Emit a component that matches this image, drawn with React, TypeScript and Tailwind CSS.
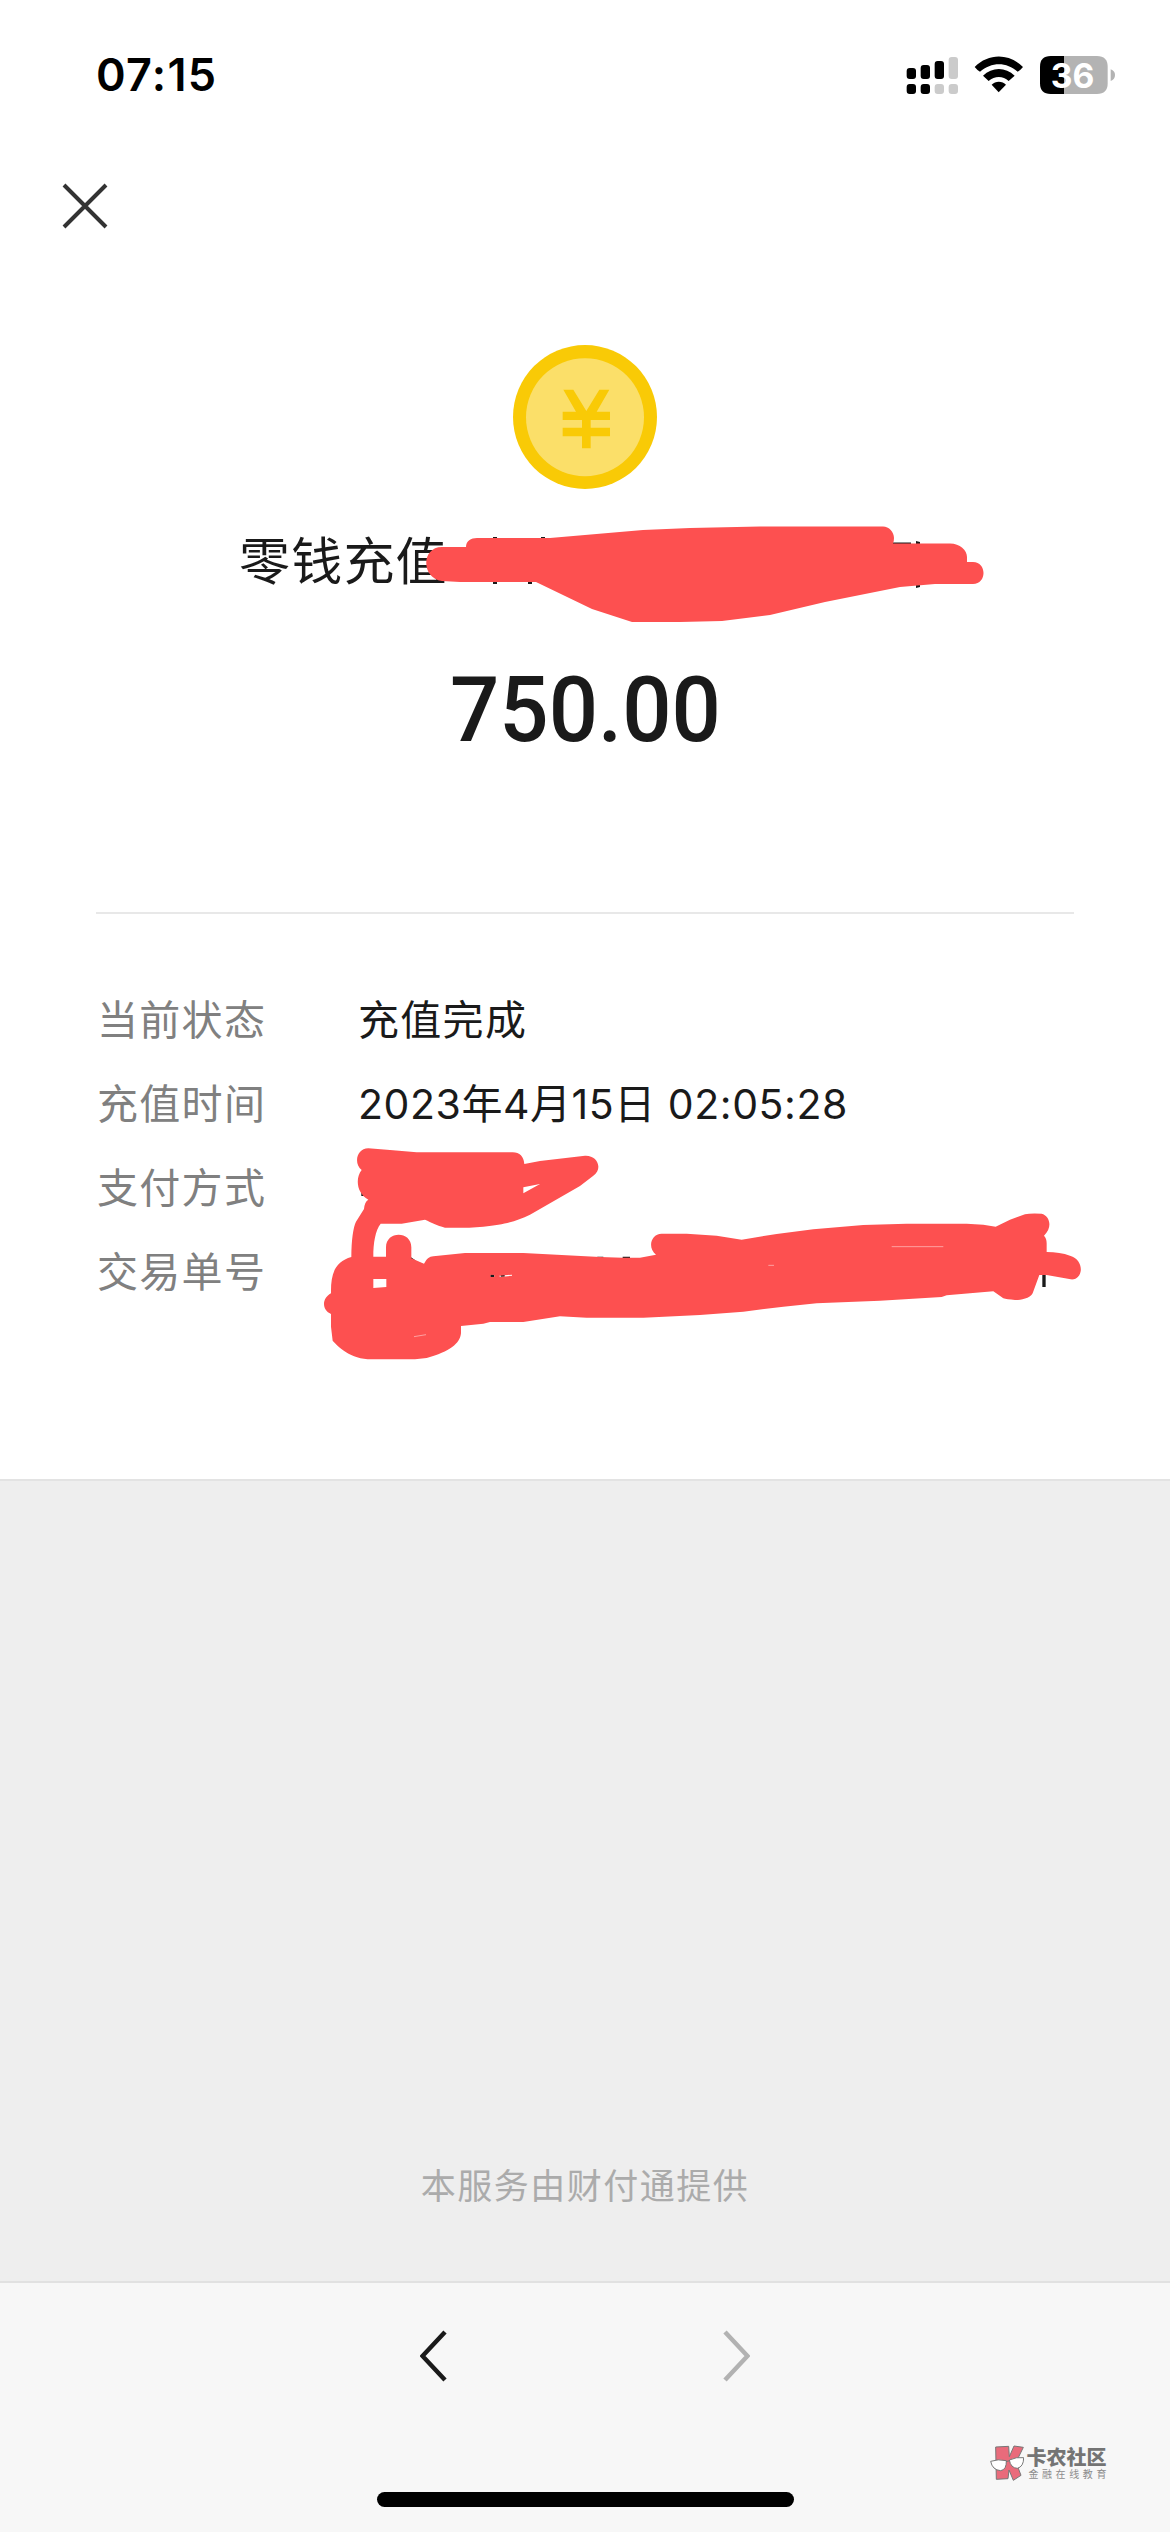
import React from 'react';

const details = [
  { label: '当前状态', value: '充值完成', tracking: 'tracking-[1.3px]' },
  { label: '充值时间', value: '2023年4月15日 02:05:28', tracking: 'tracking-[0.55px]' },
  { label: '支付方式', value: '', tracking: '' },
  { label: '交易单号', value: '', tracking: '' }
];

const StatusBar = () => (
  <div className="flex h-[150px] items-center justify-between pl-[96px] pr-[54px]">
    <span className="font-['Inter'] text-[45px] leading-[54px] font-semibold tracking-[1.3px] text-black">
      07:15
    </span>
    <svg className="h-[40px] w-[211px]" viewBox="75 72 633 120">
      {/* Dual SIM signal */}
      <g fill="#000">
        <rect x="80" y="111" width="28" height="33" rx="9" />
        <rect x="122" y="102" width="28" height="42" rx="9" />
        <rect x="164" y="90" width="28" height="54" rx="9" />
        <rect x="80" y="159" width="28" height="30" rx="9" />
        <rect x="122" y="159" width="28" height="30" rx="9" />
      </g>
      <g fill="#cbcbcb">
        <rect x="206" y="78" width="28" height="66" rx="9" />
        <rect x="164" y="159" width="28" height="30" rx="9" />
        <rect x="206" y="159" width="28" height="30" rx="9" />
      </g>
      {/* Wifi */}
      <path d="M284 108C325 66 388 66 429 108Q420 119 413 122C380 92 334 92 300 122Q292 118 284 108Z" />
      <path d="M309 134C336 107 377 107 404 134L386 150C369 134 344 134 326 150Z" />
      <path d="M335 161C346 149 367 149 378 161L356 184Z" />
      {/* Battery */}
      <path d="M552 75H512Q480 75 480 107V157Q480 189 512 189H552Z" />
      <path d="M552 75H651Q683 75 683 107V157Q683 189 651 189H552Z" fill="#b3b3b3" />
      <path d="M692 115Q705 120 705 132Q705 145 692 150Z" fill="#b3b3b3" />
      <text x="578" y="170" fill="#fff" fontFamily="Inter" fontSize="101" fontWeight="700" textAnchor="middle">
        36
      </text>
    </svg>
  </div>
);

const Coin = () => (
  <svg className="h-[144px] w-[144px]" viewBox="69 44 432 432">
    <circle cx="285" cy="260" r="216" fill="#f9ca06" />
    <circle cx="285" cy="261" r="177" fill="#fbdf69" />
    <path
      d="M220 178H250L289 242L328 178H358L320 244H360V269H302V292H360V318H302V354H276V318H218V292H276V269H218V244H258Z"
      fill="#f9ca06"
    />
  </svg>
);

const Redactions = () => (
  <svg className="pointer-events-none absolute left-0 top-0 h-[1480px] w-[1170px]" viewBox="0 0 1170 1480">
    <g fill="#1a1a1a">
      <path d="M493 537h4v47h-4zM541 537h4v10h-4zM528 570h4v14h-4zM893 542.500h18v3h-18zM916 541l4 1v3h-4zM916 588l4-1v-4h-4z" />
    </g>
    <path
      d="M442 581C421 578 421 547 442 547H466C466 541 471 538 477 538H550L643 530L690 528L760 526.500H883C889 526.500 894 532 894 538Q894 541 893 543.500H950C960 543.500 967 550 967 557V562H973C987 562 987 584 973 584H935L900 587L825 602L770 615L722 621L680 622H632L592 609L536 582H460Z"
      fill="#fd5050"
    />
    <g transform="translate(310 1130) scale(0.33333)">
      <path
        d="M154 180h8v18h-8zM302 381l14 10v10h-14zM862 380h18v6h-18zM938 380h22v8h-22zM541 433h12v8h-12zM572 435h12v5h-12zM2197 425h10v46h-10z"
        fill="#1a1a1a"
      />
      <path
        fillRule="evenodd"
        d="M175 55L240 60L320 67H608Q640 68 643 102L690 93L825 77C862 75 880 115 850 137L810 168L660 254C620 272 590 284 520 290Q460 295 405 293C380 286 365 278 345 269L275 281H212C196 300 190 340 190 380H228V352C228 302 304 302 304 352V385L342 401Q352 380 370 379L465 369H640L870 381L938 383L990 383L1038 374C1012 355 1022 311 1055 311H1130L1220 317L1295 329L1400 312L1510 298L1660 285L1790 281H1970L2020 284L2057 290L2100 269L2145 253Q2160 249 2195 251C2218 257 2230 290 2202 317Q2210 325 2210 340V366Q2250 366 2280 377C2326 390 2320 452 2282 448L2210 435H2188L2168 490C2160 507 2125 511 2115 510Q2090 508 2080 505L2050 484L1910 496L1895 501L1710 512L1520 520L1420 530L1300 545L1170 555L1000 563H830L750 559L640 576H540L520 581L453 588V610C450 640 420 665 350 684L315 688H185C120 688 85 650 68 632L63 590V552C35 540 35 505 63 490C62 430 75 395 124 381C124 330 130 290 138 275L162 237Q164 215 175 209C140 190 135 145 155 120C130 100 140 55 175 55ZM640 172L690 162L640 190ZM190 447H229V471L190 474ZM541 434L553 435V441H541ZM568 437L606 434V437L570 441Z"
        fill="#fd5050"
      />
      <path d="M1745 350H1900M1375 406H1392M312 620L348 614" stroke="#feb0b0" strokeWidth="2.500" />
    </g>
  </svg>
);

const Watermark = () => (
  <div className="absolute bottom-[51px] right-[60px] flex items-center gap-[2px]">
    <svg className="h-[36px] w-[34px]" viewBox="89 73 102 108">
      <path
        d="M106 79L145 77L147 108L161 76L189 80L167 125L182 164L159 179L146 148L143 174L108 176Z"
        fill="#e96b7b"
        stroke="#777"
        strokeWidth="3"
      />
      <path
        d="M91 122Q113 114 138 120Q139 147 121 150Q96 148 91 122ZM147 118Q168 108 190 111Q190 138 171 143Q151 142 147 118ZM137 123L148 120"
        fill="#fff"
        stroke="#777"
        strokeWidth="3"
      />
    </svg>
    <div className="flex flex-col font-['Noto_Sans_CJK_SC',sans-serif]">
      <span className="text-[20px] leading-[21px] font-black text-[#747474]">卡农社区</span>
      <span className="mt-[1px] pl-[2px] text-[10px] leading-[12px] tracking-[3.6px] text-[#8c8c8c]">金融在线教育</span>
    </div>
  </div>
);

export default function App() {
  return (
    <div className="relative flex h-[2532px] w-[1170px] flex-col overflow-hidden bg-[#eeeeee] font-['Inter','Noto_Sans_CJK_SC',sans-serif]">
      <main className="flex h-[1481px] flex-col border-b-2 border-[#e3e3e3] bg-white">
        <StatusBar />
        <div className="flex h-[112px] items-center pl-[62px]">
          <svg className="h-[46px] w-[46px]" viewBox="0 0 46 46" fill="none" stroke="#333" strokeWidth="4">
            <path d="M2 2L44 44M44 2L2 44" />
          </svg>
        </div>

        <div className="flex flex-col items-center pt-[83px]">
          <Coin />
          <div className="mt-[36px] w-full pl-[239px] text-[51px] leading-[74px] tracking-[1.2px] text-[#1a1a1a]">
            零钱充值
          </div>
          <div className="mt-[55px] scale-x-[0.965] font-['Roboto'] text-[90px] leading-[114px] font-medium text-[#1a1a1a]">
            750.00
          </div>
        </div>

        <div className="mx-[96px] mt-[144px] border-t-2 border-[#e8e8e8]" />

        <dl className="mt-[64px] pl-[97px] text-[41px] leading-[84px]">
          {details.map(({ label, value, tracking }) => (
            <div key={label} className="flex h-[84px]">
              <dt className="w-[261px] tracking-[1.3px] text-[#808080]">{label}</dt>
              <dd className={`text-[#1a1a1a] ${tracking}`}>{value}</dd>
            </div>
          ))}
        </dl>
      </main>

      <section className="flex flex-1 items-end justify-center pb-[65px]">
        <p className="text-[35px] leading-[60px] tracking-[1.5px] text-[#ababab]">本服务由财付通提供</p>
      </section>

      <footer className="flex h-[251px] flex-col items-center justify-between border-t-2 border-[#e1e1e1] bg-[#f7f7f7] pb-[25px] pt-[47px]">
        <div className="flex w-[330px] justify-between">
          <svg className="h-[52px] w-[27px]" viewBox="0 0 27 52" fill="none" stroke="#1a1a1a" strokeWidth="4.500">
            <path d="M25 2L2.500 26L25 50" />
          </svg>
          <svg className="h-[52px] w-[27px]" viewBox="0 0 27 52" fill="none" stroke="#b2b2b2" strokeWidth="4.500">
            <path d="M2 2L24.500 26L2 50" />
          </svg>
        </div>
        <div className="h-[15px] w-[417px] rounded-full bg-black" />
      </footer>

      <Redactions />
      <Watermark />
    </div>
  );
}
